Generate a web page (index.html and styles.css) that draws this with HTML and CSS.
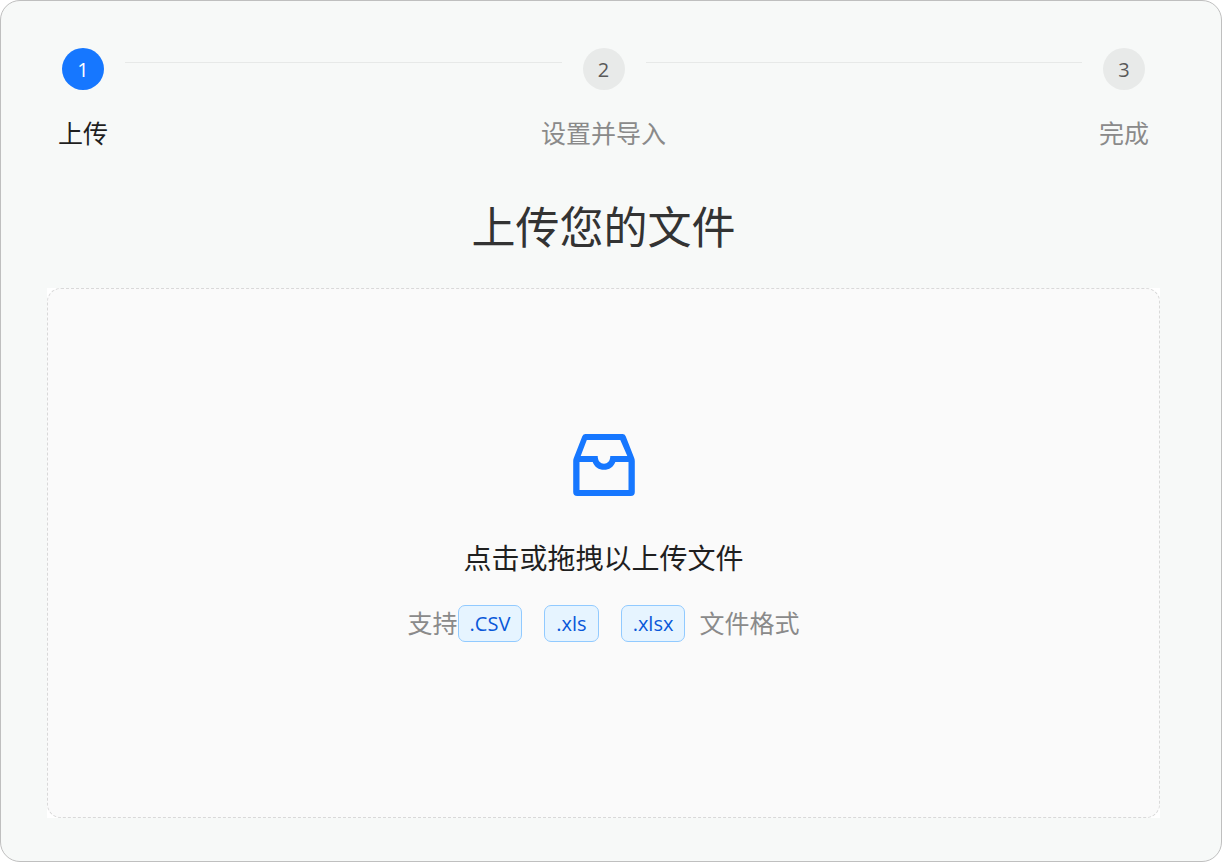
FILE: index.html
```html
<!DOCTYPE html>
<html lang="zh-CN">

<head>
    <meta charset="UTF-8" />
    <meta name="viewport" content="width=device-width, initial-scale=1.0" />
    <title>上传您的文件</title>
    <link rel="stylesheet" href="styles.css">
</head>

<body>
    <main class="panel">
        <ol class="steps">
            <li class="step active" aria-current="step">
                <span class="step-number">1</span>
                <span class="step-title">上传</span>
            </li>
            <li class="step-line" role="presentation"></li>
            <li class="step">
                <span class="step-number">2</span>
                <span class="step-title">设置并导入</span>
            </li>
            <li class="step-line" role="presentation"></li>
            <li class="step">
                <span class="step-number">3</span>
                <span class="step-title">完成</span>
            </li>
        </ol>

        <h1>上传您的文件</h1>

        <div class="upload">
            <input type="file" id="file" class="upload-input" accept=".csv,.xls,.xlsx">
            <label for="file" class="dropzone">
                <svg class="inbox-icon" viewBox="0 0 62 62" aria-hidden="true">
                    <path fill="currentColor" fill-rule="evenodd" d="M12.5 0H49.5Q51.8 0 52.7 2.2L61.2 24Q61.8 25.5 61.8 27V58Q61.8 62 57.8 62H4.2Q.2 62 .2 58V27Q.2 25.5 .8 24L9.3 2.2Q10.2 0 12.5 0ZM13.8 6L7.7 22H24.7C24.7 27 27.5 29.7 31 29.7S37.3 27 37.3 22H54.3L47.3 6ZM6.5 28V56H55.5V28H42.3C40.5 33 36.3 35.8 31 35.8S21.5 33 19.7 28Z" />
                </svg>
                <span class="upload-text">点击或拖拽以上传文件</span>
                <span class="upload-hint">
                    <span>支持</span>
                    <span class="tags">
                        <span class="tag">.CSV</span>
                        <span class="tag">.xls</span>
                        <span class="tag">.xlsx</span>
                    </span>
                    <span>文件格式</span>
                </span>
            </label>
        </div>
    </main>
</body>

</html>
```
FILE: styles.css
```css
* {
    box-sizing: border-box;
}

body {
    margin: 0;
    background-color: white;
    font-family: "Open Sans", "Noto Sans CJK SC", sans-serif;
    color: #1f1f1f;
}

.panel {
    display: flex;
    flex-direction: column;
    min-height: 100vh;
    padding: 47px 61px 43px 46px;
    border: 1px solid #bfbfbf;
    border-radius: 20px;
    background-color: #f7f9f8;
}

.steps {
    display: flex;
    margin: 0;
    padding: 0 15px;
    list-style: none;
}

.step {
    display: flex;
    flex-direction: column;
    align-items: center;
    width: 42px;
    color: #8a8a8a;
}

.step-number {
    width: 42px;
    height: 42px;
    border-radius: 50%;
    background-color: #e8eae9;
    color: #595959;
    font-size: 20px;
    line-height: 44px;
    text-align: center;
}

.step-title {
    margin-top: 22px;
    font-size: 25px;
    line-height: 42px;
    white-space: nowrap;
}

.step.active {
    color: #1f1f1f;
}

.step.active .step-number {
    background-color: #1677ff;
    color: white;
}

.step-line {
    flex: 1;
    height: 1px;
    margin: 14px 21px 0;
    background-color: #e7e9e8;
}

h1 {
    margin: 40px 0 28px;
    font-size: 44px;
    font-weight: normal;
    line-height: 66px;
    text-align: center;
    color: #333;
}

.upload {
    display: flex;
    flex: 1;
    background-color: white;
}

.upload-input {
    position: absolute;
    width: 1px;
    height: 1px;
    opacity: 0;
}

.dropzone {
    display: flex;
    flex: 1;
    flex-direction: column;
    align-items: center;
    justify-content: center;
    padding-bottom: 30px;
    border: 1px dashed #d9d9d9;
    border-radius: 14px;
    background-color: #fafafa;
    cursor: pointer;
}

.dropzone:hover,
.upload-input:focus-visible + .dropzone {
    border-color: #1677ff;
}

.inbox-icon {
    width: 62px;
    height: 62px;
    color: #1677ff;
}

.upload-text {
    margin-top: 40px;
    font-size: 28px;
    line-height: 44px;
}

.upload-hint {
    display: flex;
    align-items: center;
    margin-top: 24px;
    font-size: 25px;
    line-height: 38px;
    color: #8a8a8a;
}

.tags {
    display: flex;
    gap: 22px;
    margin-right: 14px;
}

.tag {
    padding: 0 11px;
    border: 1px solid #91caff;
    border-radius: 7px;
    background-color: #e6f4ff;
    color: #0958d9;
    font-size: 20px;
    line-height: 35px;
}
```
